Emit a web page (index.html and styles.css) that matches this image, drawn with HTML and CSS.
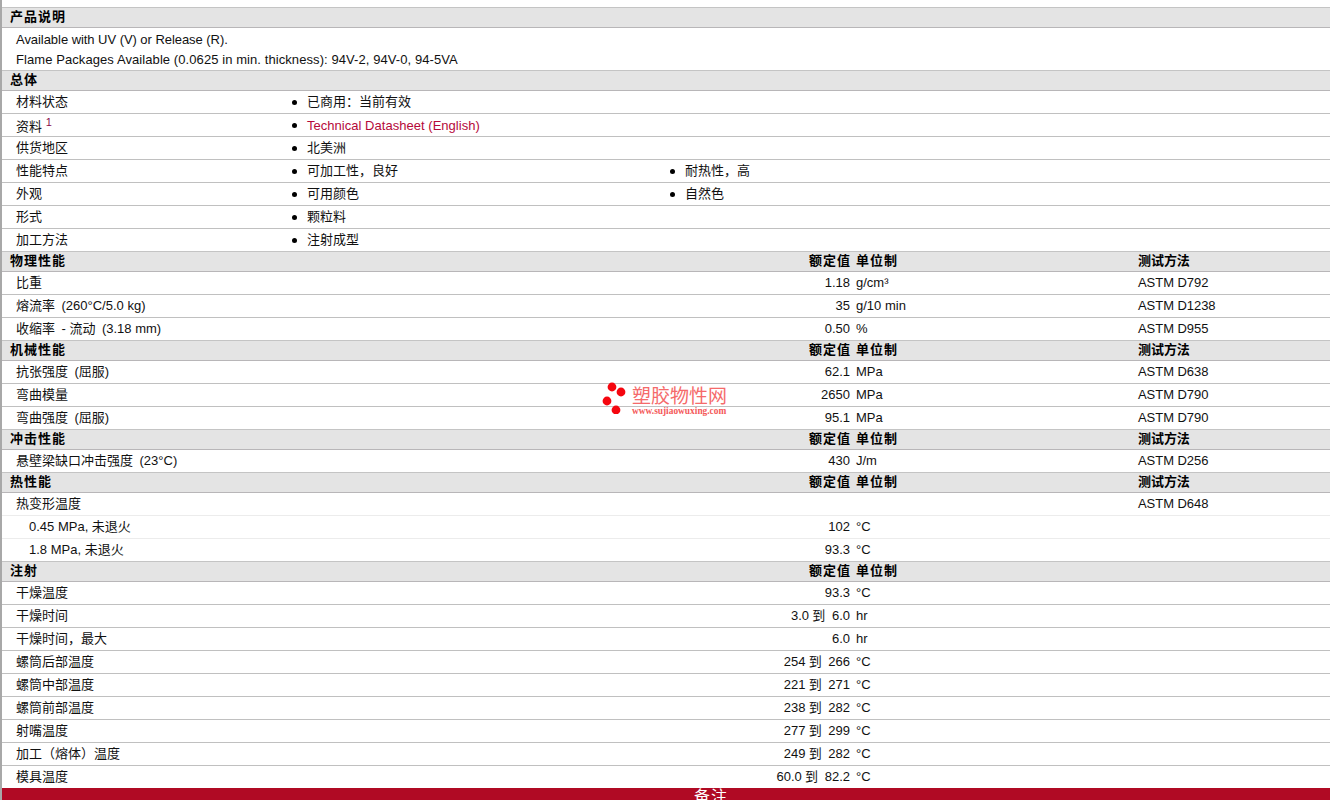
FILE: index.html
```html
<!DOCTYPE html>
<html lang="zh">
<head>
<meta charset="utf-8">
<title>产品说明</title>
<link rel="stylesheet" href="styles.css">
</head>
<body>
<main class="sheet">
  <h2 class="head"><span class="head-title">产品说明</span></h2>
  <div class="desc">
    <p class="desc-line desc-tight">Available with UV (V) or Release (R).</p>
    <p class="desc-line desc-wide">Flame Packages Available (0.0625 in min. thickness): 94V-2, 94V-0, 94-5VA</p>
  </div>

  <h2 class="head"><span class="head-title">总体</span></h2>
  <div class="row-list"><span class="label">材料状态</span><ul class="items"><li>已商用：当前有效</li></ul></div>
  <div class="row-list"><span class="label label-low">资料 <sup class="note">1</sup></span><ul class="items"><li><a class="link" href="#">Technical Datasheet (English)</a></li></ul></div>
  <div class="row-list"><span class="label">供货地区</span><ul class="items"><li>北美洲</li></ul></div>
  <div class="row-list"><span class="label">性能特点</span><ul class="items"><li>可加工性，良好</li><li>耐热性，高</li></ul></div>
  <div class="row-list"><span class="label">外观</span><ul class="items"><li>可用颜色</li><li>自然色</li></ul></div>
  <div class="row-list"><span class="label">形式</span><ul class="items"><li>颗粒料</li></ul></div>
  <div class="row-list"><span class="label">加工方法</span><ul class="items"><li>注射成型</li></ul></div>

  <h2 class="head head-grid"><span class="head-title">物理性能</span><span class="val">额定值</span><span class="unit">单位制</span><span class="test">测试方法</span></h2>
  <div class="row"><span class="label">比重</span><span class="val">1.18</span><span class="unit">g/cm³</span><span class="test">ASTM D792</span></div>
  <div class="row"><span class="label">熔流率&ensp;(260°C/5.0 kg)</span><span class="val">35</span><span class="unit">g/10 min</span><span class="test">ASTM D1238</span></div>
  <div class="row"><span class="label">收缩率&ensp;- 流动&ensp;(3.18 mm)</span><span class="val">0.50</span><span class="unit">%</span><span class="test">ASTM D955</span></div>

  <h2 class="head head-grid"><span class="head-title">机械性能</span><span class="val">额定值</span><span class="unit">单位制</span><span class="test">测试方法</span></h2>
  <div class="row"><span class="label">抗张强度&ensp;(屈服)</span><span class="val">62.1</span><span class="unit">MPa</span><span class="test">ASTM D638</span></div>
  <div class="row"><span class="label">弯曲模量</span><span class="val">2650</span><span class="unit">MPa</span><span class="test">ASTM D790</span></div>
  <div class="row"><span class="label">弯曲强度&ensp;(屈服)</span><span class="val">95.1</span><span class="unit">MPa</span><span class="test">ASTM D790</span></div>

  <h2 class="head head-grid"><span class="head-title">冲击性能</span><span class="val">额定值</span><span class="unit">单位制</span><span class="test">测试方法</span></h2>
  <div class="row"><span class="label">悬壁梁缺口冲击强度&ensp;(23°C)</span><span class="val">430</span><span class="unit">J/m</span><span class="test">ASTM D256</span></div>

  <h2 class="head head-grid"><span class="head-title">热性能</span><span class="val">额定值</span><span class="unit">单位制</span><span class="test">测试方法</span></h2>
  <div class="row row-soft"><span class="label">热变形温度</span><span class="val"></span><span class="unit"></span><span class="test">ASTM D648</span></div>
  <div class="row row-soft"><span class="label label-sub">0.45 MPa, 未退火</span><span class="val">102</span><span class="unit">°C</span><span class="test"></span></div>
  <div class="row"><span class="label label-sub">1.8 MPa, 未退火</span><span class="val">93.3</span><span class="unit">°C</span><span class="test"></span></div>

  <h2 class="head head-grid"><span class="head-title">注射</span><span class="val">额定值</span><span class="unit">单位制</span><span class="test"></span></h2>
  <div class="row"><span class="label">干燥温度</span><span class="val">93.3</span><span class="unit">°C</span><span class="test"></span></div>
  <div class="row"><span class="label">干燥时间</span><span class="val">3.0 到&nbsp; 6.0</span><span class="unit">hr</span><span class="test"></span></div>
  <div class="row"><span class="label">干燥时间，最大</span><span class="val">6.0</span><span class="unit">hr</span><span class="test"></span></div>
  <div class="row"><span class="label">螺筒后部温度</span><span class="val">254 到&nbsp; 266</span><span class="unit">°C</span><span class="test"></span></div>
  <div class="row"><span class="label">螺筒中部温度</span><span class="val">221 到&nbsp; 271</span><span class="unit">°C</span><span class="test"></span></div>
  <div class="row"><span class="label">螺筒前部温度</span><span class="val">238 到&nbsp; 282</span><span class="unit">°C</span><span class="test"></span></div>
  <div class="row"><span class="label">射嘴温度</span><span class="val">277 到&nbsp; 299</span><span class="unit">°C</span><span class="test"></span></div>
  <div class="row"><span class="label">加工（熔体）温度</span><span class="val">249 到&nbsp; 282</span><span class="unit">°C</span><span class="test"></span></div>
  <div class="row row-last"><span class="label">模具温度</span><span class="val">60.0 到&nbsp; 82.2</span><span class="unit">°C</span><span class="test"></span></div>

  <div class="notes-bar">备注</div>

  <div class="mark">
    <svg class="mark-dots" width="28" height="34" viewBox="0 0 28 34" aria-hidden="true">
      <circle cx="11" cy="7" r="4.400"/>
      <circle cx="20" cy="12" r="4.400"/>
      <circle cx="6" cy="21" r="4.400"/>
      <circle cx="15" cy="30" r="4.400"/>
    </svg>
    <div class="mark-text">
      <div class="mark-name">塑胶物性网</div>
      <div class="mark-url">www.sujiaowuxing.com</div>
    </div>
  </div>
</main>
</body>
</html>
```
FILE: styles.css
```css
* { box-sizing: border-box; }
html, body { margin: 0; padding: 0; background: #fff; }
body { height: 800px; overflow: hidden; }

.sheet {
  position: relative;
  height: 800px;
  overflow: hidden;
  padding-top: 8px;
  border-left: 2px solid #a8a8a8;
  font-family: "Liberation Sans", "Noto Sans CJK SC", sans-serif;
  font-size: 13px;
  line-height: 16px;
  color: #111;
}

.head {
  height: 20px;
  margin: 0;
  padding: 0 0 2px 8px;
  display: flex;
  align-items: center;
  background: #e4e4e4;
  border-bottom: 1px solid #b8b6b8;
  box-shadow: 0 -1px 0 #c4c4c4;
  font-size: 13px;
  font-weight: 700;
  letter-spacing: 1px;
  color: #000;
}
.head-grid {
  display: grid;
  grid-template-columns: 280px 560px 282px 1fr;
  align-items: center;
}
.head-grid .val { letter-spacing: 1px; margin-right: -1px; }

.desc {
  height: 43px;
  padding: 2px 0 0 14px;
  border-bottom: 1px solid #c4c4c4;
}
.desc-line {
  margin: 0;
  height: 20px;
  line-height: 20px;
}
.desc-tight { letter-spacing: -0.05px; }
.desc-wide { letter-spacing: 0.08px; }

.row, .row-list {
  height: 23px;
  border-bottom: 1px solid #c0c0c0;
  align-items: center;
}
.row {
  display: grid;
  grid-template-columns: 288px 560px 282px 1fr;
}
.row-soft { border-bottom-color: #ececec; }
.row-last { height: 22px; border-bottom: 0; }
.row-list { display: flex; }

.label { padding-left: 14px; white-space: nowrap; }
.row-list .label { width: 288px; flex: none; }
.label-low { padding-top: 3px; }
.label-sub { padding-left: 27px; }
.note { color: #8a0a4c; font-size: 11px; line-height: 0; vertical-align: 5px; }

.val { text-align: right; white-space: pre; word-spacing: -0.3px; }
.unit, .test { padding-left: 6px; }
.test { letter-spacing: -0.05px; }

.items {
  display: grid;
  grid-template-columns: 378px 378px;
  margin: 0;
  padding: 0 0 0 2px;
  list-style: none;
}
.items li { display: flex; align-items: center; gap: 10px; }
.items li::before {
  content: "";
  width: 5px;
  height: 5px;
  border-radius: 50%;
  background: #000;
  flex: none;
}
.link { padding-top: 2px; color: #b5093a; text-decoration: none; letter-spacing: 0.03px; }

.notes-bar {
  height: 30px;
  padding-left: 692px;
  background: #b00a24;
  color: #fff;
  font-size: 16px;
  line-height: 18px;
  letter-spacing: 1px;
}

.mark {
  position: absolute;
  left: 599px;
  top: 380px;
  display: flex;
  gap: 3px;
}
.mark-dots { fill: #f5060f; }
.mark-text { padding-top: 6px; }
.mark-name {
  font-size: 19px;
  line-height: 21px;
  color: #f56a6a;
}
.mark-url {
  font-family: "Liberation Serif", serif;
  font-size: 9.400px;
  font-weight: 700;
  line-height: 9px;
  color: #f45a5a;
}
```
